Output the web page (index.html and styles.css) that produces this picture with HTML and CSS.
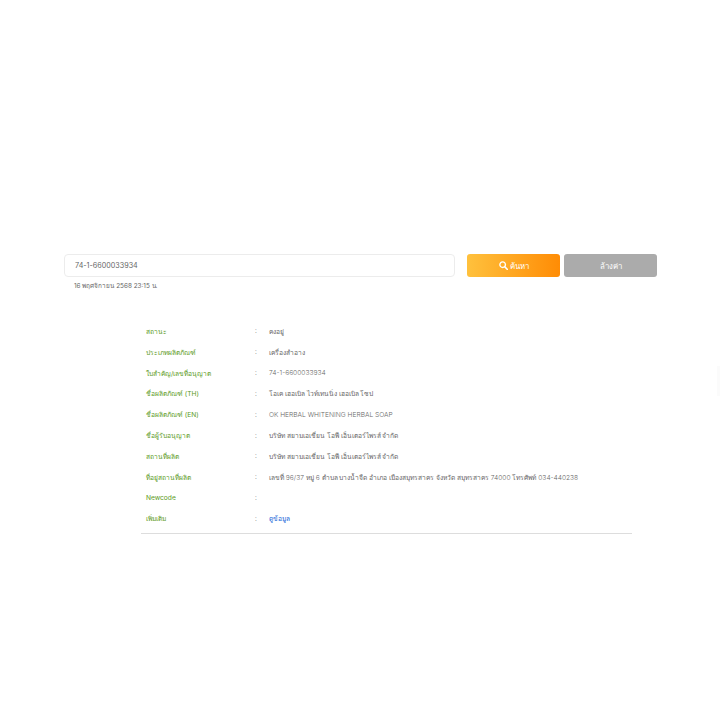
FILE: index.html
```html
<!DOCTYPE html>
<html lang="th">
<head>
  <meta charset="UTF-8">
  <meta name="viewport" content="width=device-width, initial-scale=1.0">
  <title>ตรวจสอบการอนุญาต</title>
  <link rel="stylesheet" href="styles.css">
</head>
<body>
  <section class="search">
    <div class="search-row">
      <input class="search-input" type="text" value="74-1-6600033934">
      <button class="btn btn-search">
        <svg class="icon" viewBox="0 0 16 16" width="9" height="9"><circle cx="6.5" cy="6.5" r="5" fill="none" stroke="currentColor" stroke-width="2.4"/><path d="M10.5 10.5L15 15" stroke="currentColor" stroke-width="2.8" stroke-linecap="round"/></svg>
        ค้นหา
      </button>
      <button class="btn btn-clear">ล้างค่า</button>
    </div>
    <p class="stamp">16 พฤศจิกายน 2568 23:15 น.</p>
  </section>

  <table class="result">
    <tr><th>สถานะ</th><td class="sep">:</td><td>คงอยู่</td></tr>
    <tr><th>ประเภทผลิตภัณฑ์</th><td class="sep">:</td><td>เครื่องสำอาง</td></tr>
    <tr><th>ใบสำคัญ/เลขที่อนุญาต</th><td class="sep">:</td><td>74-1-6600033934</td></tr>
    <tr><th>ชื่อผลิตภัณฑ์ (TH)</th><td class="sep">:</td><td>โอเค เฮอเบิล ไวท์เทนนิ่ง เฮอเบิล โซป</td></tr>
    <tr><th>ชื่อผลิตภัณฑ์ (EN)</th><td class="sep">:</td><td>OK HERBAL WHITENING HERBAL SOAP</td></tr>
    <tr><th>ชื่อผู้รับอนุญาต</th><td class="sep">:</td><td>บริษัท สยามเอเชี่ยน โอพี เอ็นเตอร์ไพรส์ จำกัด</td></tr>
    <tr><th>สถานที่ผลิต</th><td class="sep">:</td><td>บริษัท สยามเอเชี่ยน โอพี เอ็นเตอร์ไพรส์ จำกัด</td></tr>
    <tr><th>ที่อยู่สถานที่ผลิต</th><td class="sep">:</td><td>เลขที่ 96/37 หมู่ 6 ตำบล บางน้ำจืด อำเภอ เมืองสมุทรสาคร จังหวัด สมุทรสาคร 74000 โทรศัพท์ 034-440238</td></tr>
    <tr><th>Newcode</th><td class="sep">:</td><td></td></tr>
    <tr class="last"><th>เพิ่มเติม</th><td class="sep">:</td><td><a href="#ข้อมูล">ดูข้อมูล</a></td></tr>
  </table>

  <div class="side-tab"></div>
</body>
</html>
```

FILE: styles.css
```css
body {
  font-family: Inter, "Noto Sans", "DejaVu Sans", sans-serif;
  margin: 0;
  padding: 254px 0 0;
  background-color: white;
  color: #666;
  font-size: 7.5px;
}
.search {
  padding: 0 63px 0 64px;
}
.search-row {
  display: flex;
  align-items: center;
  gap: 12px;
}
.search-input {
  flex: 1;
  min-width: 0;
  height: 23px;
  box-sizing: border-box;
  padding: 0 10px;
  border: 1px solid #ececec;
  border-radius: 4px;
  font-family: inherit;
  font-size: 7.2px;
  color: #666;
}
.btn {
  flex: none;
  width: 93px;
  height: 23px;
  display: flex;
  align-items: center;
  justify-content: center;
  gap: 2px;
  border: none;
  border-radius: 3px;
  color: white;
  font-family: inherit;
  font-size: 7.8px;
  padding: 0;
}
.btn-search {
  background: linear-gradient(to right, #ffc13d, #ff8c05);
}
.btn-clear {
  background-color: #ababab;
  margin-left: -8px;
}
.stamp {
  margin: 4px 0 0 10px;
  font-size: 6.4px;
  line-height: 10px;
}
.result {
  width: 491px;
  margin: 30px 0 0 141px;
  border-collapse: collapse;
  border-bottom: 1px solid #ddd;
  font-size: 6.65px;
}
.result tr {
  height: 20.85px;
}
.result tr.last {
  height: 25px;
}
.result tr.last th,
.result tr.last td {
  padding-bottom: 4px;
}
.result th,
.result td {
  padding: 0;
  text-align: left;
  font-weight: 300;
  white-space: nowrap;
}
.result th {
  width: 109px;
  padding-left: 5px;
  color: #5b9a1c;
  font-weight: 400;
}
.result .sep {
  width: 14px;
}
.result a {
  color: #1565d8;
  font-weight: 400;
  text-decoration: none;
}
.side-tab {
  position: fixed;
  right: 0;
  top: 366px;
  width: 3px;
  height: 30px;
  background-color: #fbfbfb;
}
```
